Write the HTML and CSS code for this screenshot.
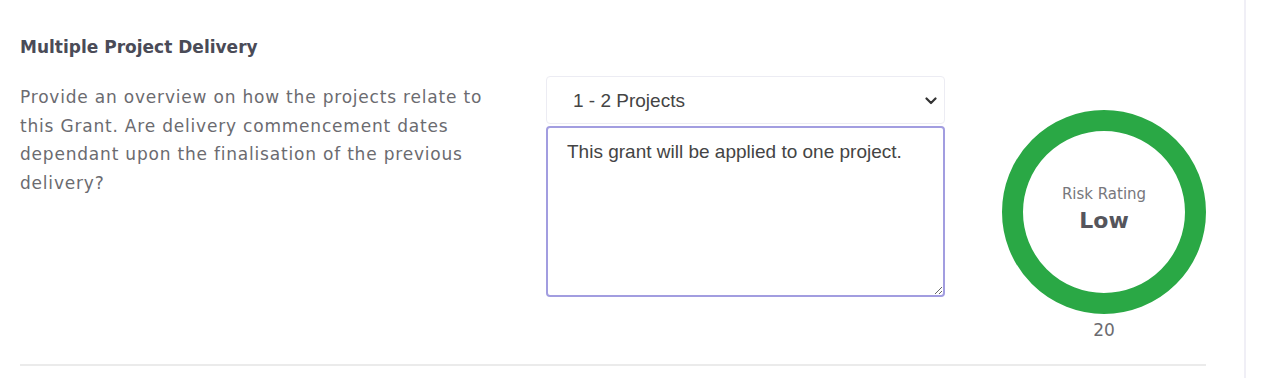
FILE: index.html
```html
<!DOCTYPE html>
<html lang="en">
<head>
<meta charset="utf-8">
<title>Multiple Project Delivery</title>
<link rel="stylesheet" href="styles.css">
</head>
<body>
<div class="page">
  <main class="panel">
    <section class="question">
      <h3 class="q-title">Multiple Project Delivery</h3>
      <div class="q-row">
        <p class="q-desc">Provide an overview on how the projects relate to this Grant. Are delivery commencement dates dependant upon the finalisation of the previous delivery?</p>
        <div class="q-inputs">
          <div class="select-wrap">
            <select class="q-select">
              <option>1 - 2 Projects</option>
            </select>
            <svg class="chev" width="12" height="8" viewBox="0 0 12 8"><path d="M1.5 1.5 L6 6 L10.5 1.5" fill="none" stroke="#333" stroke-width="2.2" stroke-linecap="round" stroke-linejoin="round"/></svg>
          </div>
          <textarea class="q-text">This grant will be applied to one project.</textarea>
        </div>
        <div class="q-rating">
          <div class="ring">
            <span class="ring-label">Risk Rating</span>
            <span class="ring-value">Low</span>
          </div>
          <div class="score">20</div>
        </div>
      </div>
    </section>
  </main>
  <aside class="side"></aside>
</div>
</body>
</html>
```
FILE: styles.css
```css
html, body {
  margin: 0;
  padding: 0;
  background: #fff;
}
body {
  font-family: "DejaVu Sans", sans-serif;
  width: 1278px;
  height: 378px;
  overflow: hidden;
}
.page {
  display: flex;
  height: 378px;
}
.panel {
  width: 1244px;
  padding: 0 38px 0 20px;
  box-sizing: border-box;
}
.side {
  width: 2px;
  background: #f0eff6;
  flex: none;
}
.question {
  padding-top: 36px;
  border-bottom: 2px solid #ebebeb;
  height: 328px;
  box-sizing: content-box;
}
.q-title {
  margin: 0 0 18px 0;
  font-size: 17px;
  font-weight: 700;
  color: #4a4b57;
  line-height: 22px;
}
.q-row {
  display: grid;
  grid-template-columns: 526px 399px 1fr;
  align-items: start;
}
.q-desc {
  margin: 7px 0 0 0;
  width: 492px;
  font-size: 17px;
  line-height: 28.7px;
  letter-spacing: 0.8px;
  color: #6b6b70;
}
.q-inputs {
  display: flex;
  flex-direction: column;
  gap: 2px;
}
.select-wrap {
  position: relative;
}
.q-select {
  appearance: none;
  -webkit-appearance: none;
  width: 100%;
  height: 48px;
  border: 1px solid #ececf3;
  border-radius: 4px;
  background: #fff;
  padding: 0 0 0 26px;
  font-family: "Liberation Sans", Arial, sans-serif;
  font-size: 19px;
  color: #444;
  display: block;
}
.chev {
  position: absolute;
  right: 8px;
  top: 21px;
  pointer-events: none;
}
.q-text {
  width: 100%;
  height: 171px;
  box-sizing: border-box;
  border: 2px solid #a29de0;
  border-radius: 4px;
  padding: 13px 19px;
  font-family: "Liberation Sans", Arial, sans-serif;
  font-size: 19px;
  line-height: 22px;
  color: #444;
  resize: vertical;
  display: block;
  outline: none;
}
.q-rating {
  justify-self: end;
  display: flex;
  flex-direction: column;
  align-items: center;
  margin-top: 34px;
  width: 204px;
}
.ring {
  width: 204px;
  height: 204px;
  box-sizing: border-box;
  border: 21px solid #2aa845;
  border-radius: 50%;
  display: flex;
  flex-direction: column;
  align-items: center;
  justify-content: center;
  padding-bottom: 4px;
}
.ring-label {
  font-size: 15px;
  color: #77777c;
  line-height: 22px;
}
.ring-value {
  font-size: 22px;
  font-weight: 600;
  color: #55555c;
  line-height: 32px;
}
.score {
  margin-top: 5px;
  font-size: 17px;
  color: #6b6b70;
  line-height: 22px;
}
```
